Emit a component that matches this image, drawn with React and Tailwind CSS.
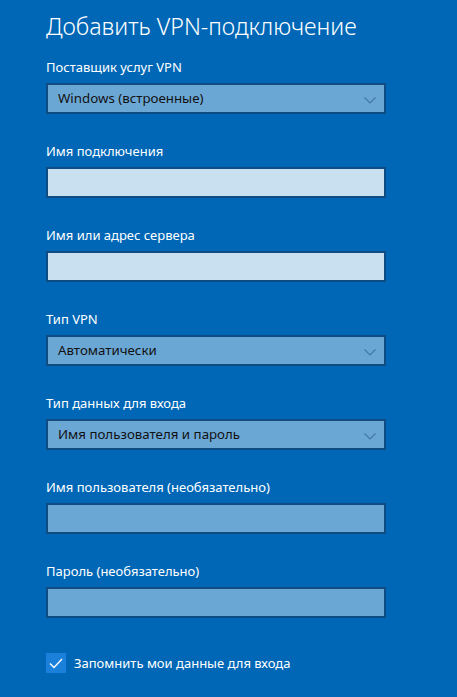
import React from 'react';

const Chevron = () => (
  <svg width="12" height="7" viewBox="0 0 12 7" className="absolute right-[8px] top-[12px]">
    <path d="M0.5 0.5 L6 6 L11.5 0.5" fill="none" stroke="#3f76a8" strokeWidth="1.1" />
  </svg>
);

const Select = ({ value }) => (
  <div className="relative w-[340px] h-[31px] border-2 border-[#0f4c83] bg-[#6ba7d5] pl-[10px] flex items-center text-[13.3px] text-[#111]">
    {value}
    <Chevron />
  </div>
);

const Input = ({ light }) => (
  <div className={`w-[340px] h-[31px] border-2 border-[#0f4c83] ${light ? 'bg-[#c9e0f1]' : 'bg-[#6ba7d5]'}`} />
);

const Field = ({ label, children }) => (
  <div className="flex flex-col">
    <div className="h-[18px] leading-[18px] text-[13px] text-white">{label}</div>
    <div className="mt-[7px]">{children}</div>
  </div>
);

export default function App() {
  return (
    <div className="w-[457px] h-[697px] bg-[#0067b6] pl-[46px] pt-[12px] overflow-hidden" style={{ fontFamily: '"Noto Sans", "Open Sans", sans-serif' }}>
      <h1 className="h-[28px] leading-[28px] text-[23.2px] font-light text-white">Добавить VPN-подключение</h1>
      <div className="mt-[18px] flex flex-col gap-[28px]">
        <Field label="Поставщик услуг VPN">
          <Select value="Windows (встроенные)" />
        </Field>
        <Field label="Имя подключения">
          <Input light />
        </Field>
        <Field label="Имя или адрес сервера">
          <Input light />
        </Field>
        <Field label="Тип VPN">
          <Select value="Автоматически" />
        </Field>
        <Field label="Тип данных для входа">
          <Select value="Имя пользователя и пароль" />
        </Field>
        <Field label="Имя пользователя (необязательно)">
          <Input />
        </Field>
        <Field label="Пароль (необязательно)">
          <Input />
        </Field>
      </div>
      <div className="mt-[35px] flex items-center gap-[8px]">
        <div className="w-[20px] h-[20px] bg-[#1a80da] flex items-center justify-center">
          <svg width="14" height="11" viewBox="0 0 14 11">
            <path d="M1 5.5 L5 9.5 L13 1" fill="none" stroke="white" strokeWidth="1.4" />
          </svg>
        </div>
        <span className="text-[13px] text-white leading-[20px]">Запомнить мои данные для входа</span>
      </div>
    </div>
  );
}
